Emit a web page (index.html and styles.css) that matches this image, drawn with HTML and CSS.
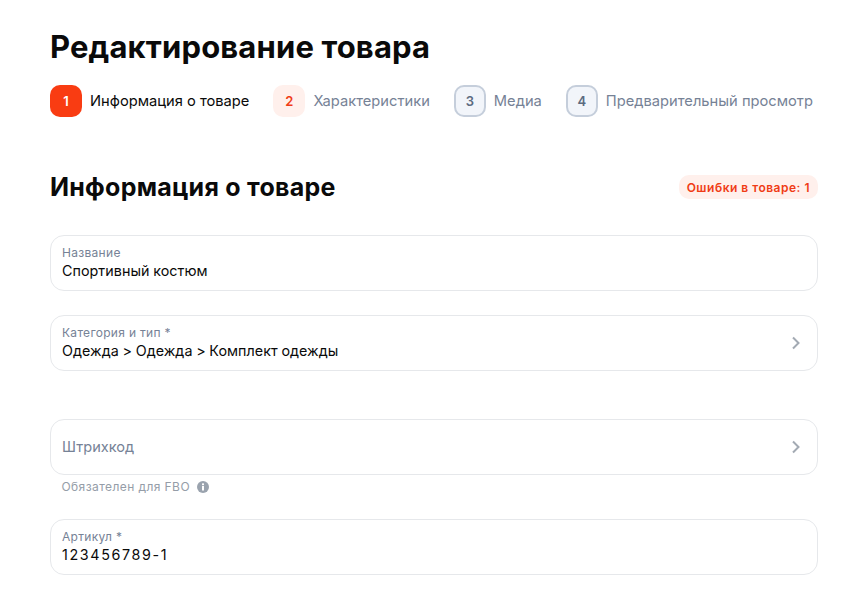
FILE: index.html
```html
<!DOCTYPE html>
<html lang="ru">
<head>
<meta charset="utf-8">
<title>Редактирование товара</title>
<link rel="stylesheet" href="styles.css">
</head>
<body>
<main class="page">
  <h1 class="title">Редактирование товара</h1>
  <ol class="steps">
    <li class="step step-active"><span class="num">1</span><span class="label">Информация о товаре</span></li>
    <li class="step step-error"><span class="num">2</span><span class="label">Характеристики</span></li>
    <li class="step"><span class="num">3</span><span class="label">Медиа</span></li>
    <li class="step"><span class="num">4</span><span class="label">Предварительный просмотр</span></li>
  </ol>
  <div class="section-head">
    <h2 class="section-title">Информация о товаре</h2>
    <span class="badge">Ошибки в товаре: 1</span>
  </div>
  <div class="field field-name">
    <div class="field-body"><span class="field-label">Название</span><span class="field-value">Спортивный костюм</span></div>
  </div>
  <div class="field field-cat">
    <div class="field-body"><span class="field-label">Категория и тип *</span><span class="field-value">Одежда &gt; Одежда &gt; Комплект одежды</span></div>
    <svg class="chevron" width="10" height="14" viewBox="0 0 10 14"><path d="M2 1.5 7.5 7 2 12.5" fill="none" stroke="#a3aab3" stroke-width="2"/></svg>
  </div>
  <div class="field field-barcode">
    <div class="field-body"><span class="field-placeholder">Штрихкод</span></div>
    <svg class="chevron" width="10" height="14" viewBox="0 0 10 14"><path d="M2 1.5 7.5 7 2 12.5" fill="none" stroke="#a3aab3" stroke-width="2"/></svg>
  </div>
  <p class="hint">Обязателен для FBO
    <svg class="info" width="12" height="12" viewBox="0 0 12 12"><circle cx="6" cy="6" r="6" fill="#9aa3ae"/><rect x="5" y="5" width="2" height="4.5" fill="#fff"/><rect x="5" y="2.4" width="2" height="1.8" fill="#fff"/></svg>
  </p>
  <div class="field field-sku">
    <div class="field-body"><span class="field-label">Артикул *</span><span class="field-value field-mono">123456789-1</span></div>
  </div>
</main>
</body>
</html>
```
FILE: styles.css
```css
* { box-sizing: border-box; }
html, body { margin: 0; padding: 0; background: #fff; overflow: hidden; }
body { font-family: Inter, "Noto Sans", sans-serif; color: #0a0a0a; }
.page { padding: 29px 40px 0 50px; }
.title { margin: 0; font-size: 31px; line-height: 36px; font-weight: 700; letter-spacing: 0.15px; }
.steps { list-style: none; margin: 20px 0 0; padding: 0; display: flex; gap: 24px; }
.step { display: flex; align-items: center; gap: 8px; white-space: nowrap; }
.num { width: 32px; height: 32px; border-radius: 10px; display: flex; align-items: center; justify-content: center; font-size: 13px; font-weight: 600; background: #f2f5fa; border: 2px solid #c5cedb; color: #5c6b80; }
.label { font-size: 14.7px; color: #768296; }
.step-active .num { background: #f93c12; border: 0; color: #fff; }
.step-active .label { color: #0a0a0a; }
.step-error .num { background: #fff0ec; border: 0; color: #f03c16; }
.section-head { margin-top: 54px; display: flex; justify-content: space-between; align-items: center; height: 32px; }
.section-title { margin: 0; font-size: 25px; line-height: 32px; font-weight: 700; letter-spacing: 0.25px; }
.badge { height: 24px; padding: 0 8px; display: flex; align-items: center; border-radius: 10px; background: #fff0ec; color: #f03c16; font-size: 12px; font-weight: 600; letter-spacing: 0.5px; white-space: nowrap; }
.field { height: 56px; border: 1px solid #e6e8eb; border-radius: 14px; padding: 0 16px 0 11px; display: flex; align-items: center; justify-content: space-between; }
.field-body { display: flex; flex-direction: column; padding-top: 1px; }
.field-label { font-size: 12px; line-height: 14px; color: #768296; letter-spacing: 0.3px; }
.field-value { margin-top: 1px; font-size: 14.3px; line-height: 20px; color: #0a0a0a; letter-spacing: 0.05px; word-spacing: -0.4px; }
.field-value.field-mono { letter-spacing: 1.65px; }
.field-placeholder { margin-top: -1px; font-size: 14.6px; color: #768296; }
.field-name { margin-top: 32px; }
.field-cat { margin-top: 24px; }
.field-barcode { margin-top: 48px; }
.hint { margin: 5px 0 0 11.5px; height: 14px; display: flex; align-items: center; gap: 7px; font-size: 12px; line-height: 14px; color: #959da8; letter-spacing: 0.42px; }
.field-sku { margin-top: 25px; }
```
